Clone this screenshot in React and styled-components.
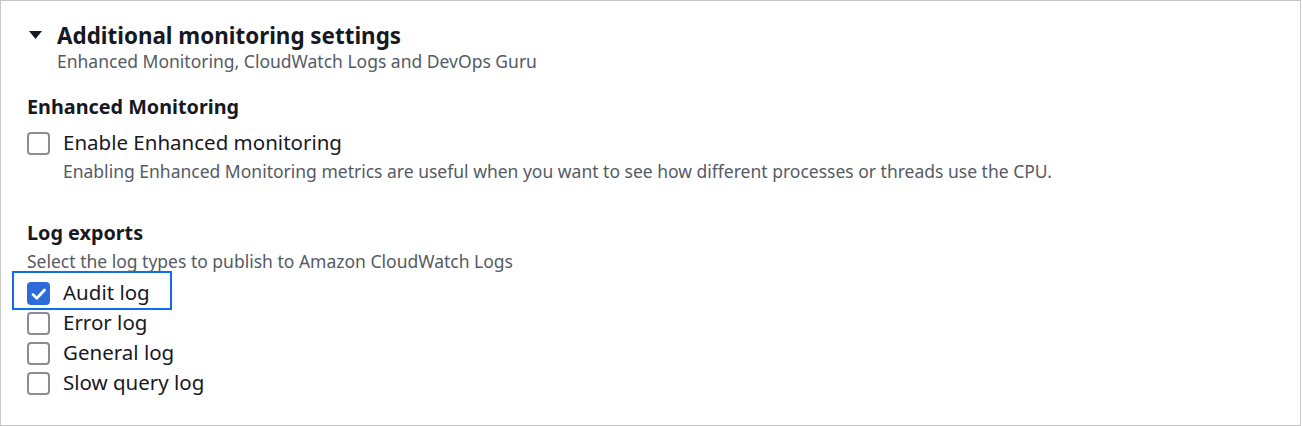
import React from "react";
import styled, { createGlobalStyle, css } from "styled-components";

const GlobalStyle = createGlobalStyle`
  html, body { margin: 0; padding: 0; background: #ffffff; }
  body { font-family: "Noto Sans", "Open Sans", sans-serif; color: #16191f; }
  * { box-sizing: border-box; }
`;

const Panel = styled.section`
  width: 1301px;
  height: 426px;
  border: 1px solid #c6c6c6;
  padding: 21px 26px 0 26px;
  background: #fff;
`;

const Header = styled.div`
  display: flex;
  flex-direction: column;
`;

const TitleRow = styled.div`
  display: flex;
  align-items: center;
`;

const Caret = styled.svg`
  width: 13px;
  height: 8px;
  margin: 0 15px 0 2px;
  flex: none;
  position: relative;
  top: -1px;
`;

const Title = styled.h2`
  margin: 0;
  font-size: 22.4px;
  line-height: 28px;
  font-weight: 700;
  color: #16191f;
`;

const Subtitle = styled.div`
  padding-left: 30px;
  font-size: 17.5px;
  line-height: 22px;
  color: #545b64;
`;

const Section = styled.div`
  display: flex;
  flex-direction: column;
  margin-top: ${(p) => p.$top}px;
`;

const SectionTitle = styled.h3`
  margin: 0;
  font-size: 19.8px;
  line-height: ${(p) => p.$lh || 26}px;
  font-weight: 700;
  color: #16191f;
`;

const Hint = styled.div`
  font-size: 17.5px;
  line-height: ${(p) => p.$lh || 22}px;
  color: #545b64;
  margin-top: ${(p) => p.$top || 0}px;
  padding-left: ${(p) => p.$indent || 0}px;
  white-space: nowrap;
`;

const CheckRow = styled.label`
  position: relative;
  display: inline-flex;
  align-self: flex-start;
  align-items: center;
  height: ${(p) => p.$h}px;
  margin-top: ${(p) => p.$top || 0}px;
  ${(p) =>
    p.$focused &&
    css`
      &::after {
        content: "";
        position: absolute;
        left: -15px;
        right: -22px;
        top: -6px;
        bottom: -3px;
        border: 2px solid #0f6ee6;
        pointer-events: none;
      }
    `}
`;

const Box = styled.span`
  width: 23px;
  height: 23px;
  flex: none;
  border-radius: 4px;
  margin-right: 13px;
  display: flex;
  align-items: center;
  justify-content: center;
  position: relative;
  top: ${(p) => p.$shift || 0}px;
  ${(p) =>
    p.$checked
      ? css`
          background: #2d6bdb;
          border: 2px solid #2d6bdb;
        `
      : css`
          background: #fff;
          border: 2px solid #8c8c94;
        `}
`;

const CheckMark = styled.svg`
  width: 23px;
  height: 23px;
  position: absolute;
  left: -2px;
  top: -2px;
`;

const Label = styled.span`
  font-size: 20.5px;
  line-height: ${(p) => p.$lh}px;
  color: #16191f;
  white-space: nowrap;
`;

const List = styled.div`
  display: flex;
  flex-direction: column;
  margin-top: 6px;
`;

function Checkbox({ checked, label, focused, h = 30, top, shift }) {
  return (
    <CheckRow $focused={focused} $h={h} $top={top}>
      <Box $checked={checked} $shift={shift}>
        {checked && (
          <CheckMark viewBox="0 0 23 23">
            <path d="M6 12.5 L9.8 16.3 L17.5 8" fill="none" stroke="#fff" strokeWidth="2.8" strokeLinecap="round" strokeLinejoin="round" />
          </CheckMark>
        )}
      </Box>
      <Label $lh={h}>{label}</Label>
    </CheckRow>
  );
}

const logs = [
  { label: "Audit log", checked: true, focused: true },
  { label: "Error log" },
  { label: "General log" },
  { label: "Slow query log" },
];

export default function App() {
  return (
    <>
      <GlobalStyle />
      <Panel>
        <Header>
          <TitleRow>
            <Caret viewBox="0 0 13 8">
              <polygon points="0,0 13,0 6.5,8" fill="#16191f" />
            </Caret>
            <Title>Additional monitoring settings</Title>
          </TitleRow>
          <Subtitle>Enhanced Monitoring, CloudWatch Logs and DevOps Guru</Subtitle>
        </Header>

        <Section $top={22}>
          <SectionTitle>Enhanced Monitoring</SectionTitle>
          <Checkbox label="Enable Enhanced monitoring" h={26} top={9} shift={1} />
          <Hint $top={5} $indent={36}>
            Enabling Enhanced Monitoring metrics are useful when you want to see how different processes or threads use the CPU.
          </Hint>
        </Section>

        <Section $top={41}>
          <SectionTitle $lh={20}>Log exports</SectionTitle>
          <Hint $lh={20} $top={8}>Select the log types to publish to Amazon CloudWatch Logs</Hint>
          <List>
            {logs.map((l) => (
              <Checkbox key={l.label} label={l.label} checked={l.checked} focused={l.focused} shift={1} />
            ))}
          </List>
        </Section>
      </Panel>
    </>
  );
}
